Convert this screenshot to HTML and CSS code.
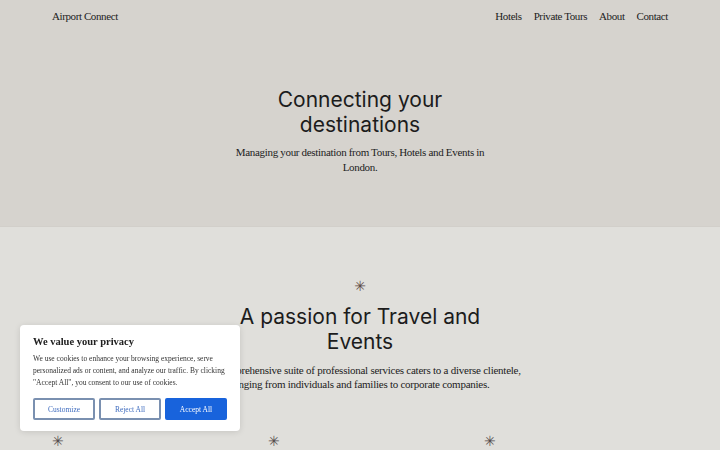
FILE: index.html
```html
<!DOCTYPE html>
<html lang="en">
<head>
    <meta charset="UTF-8">
    <meta name="viewport" content="width=device-width, initial-scale=1.0">
    <title>Airport Connect</title>
    <link rel="stylesheet" href="styles.css">
</head>
<body>
    <header class="hero">
        <nav class="site-nav">
            <a class="brand" href="#">Airport Connect</a>
            <ul class="nav-links">
                <li><a href="#">Hotels</a></li>
                <li><a href="#">Private Tours</a></li>
                <li><a href="#">About</a></li>
                <li><a href="#">Contact</a></li>
            </ul>
        </nav>
        <div class="hero-body">
            <h1>Connecting your destinations</h1>
            <p>Managing your destination from Tours, Hotels and Events in London.</p>
        </div>
    </header>

    <section class="intro">
        <span class="star">&#10035;</span>
        <h2>A passion for Travel and Events</h2>
        <p>Our comprehensive suite of professional services caters to a diverse clientele, ranging from individuals and families to corporate companies.</p>

        <div class="features">
            <div class="feature"><span class="star">&#10035;</span></div>
            <div class="feature"><span class="star">&#10035;</span></div>
            <div class="feature"><span class="star">&#10035;</span></div>
        </div>
    </section>

    <!-- Cookie consent -->
    <div class="cookie-box">
        <h3>We value your privacy</h3>
        <p>We use cookies to enhance your browsing experience, serve personalized ads or content, and analyze our traffic. By clicking "Accept All", you consent to our use of cookies.</p>
        <div class="cookie-actions">
            <button class="btn btn-outline">Customize</button>
            <button class="btn btn-outline">Reject All</button>
            <button class="btn btn-solid">Accept All</button>
        </div>
    </div>
</body>
</html>
```

FILE: styles.css
```css
/* Basic Styles */
body {
    margin: 0;
    font-family: "Liberation Serif", serif;
    color: #222;
    overflow: hidden;
}

a {
    color: inherit;
    text-decoration: none;
}

h1, h2 {
    font-family: Inter, "Noto Sans", sans-serif;
    font-weight: 400;
    font-size: 21px;
    line-height: 25px;
    margin: 0;
    color: #1c1c1c;
}

/* Header / Hero */
.hero {
    background: #d6d3ce;
    height: 227px;
    border-bottom: 1px solid #d2cfca;
    box-sizing: border-box;
}

.site-nav {
    display: flex;
    justify-content: space-between;
    align-items: center;
    padding: 10px 52px 0;
    font-size: 11px;
    letter-spacing: -0.4px;
}

.nav-links {
    display: flex;
    gap: 12px;
    list-style: none;
    margin: 0;
    padding: 0;
}

.hero-body {
    text-align: center;
    width: 260px;
    margin: 0 auto;
    padding-top: 65px;
}

.hero-body h1 {
    width: 180px;
    margin: 0 auto;
}

.hero-body p {
    font-size: 11px;
    line-height: 15px;
    margin: 8px 0 0;
    letter-spacing: -0.32px;
}

/* Intro section */
.intro {
    background: #e0dfdb;
    height: 223px;
    text-align: center;
    padding-top: 51px;
    box-sizing: border-box;
}

.star {
    display: block;
    color: #5e4c48;
    font-size: 14px;
    font-weight: bold;
    line-height: 16px;
    font-family: "DejaVu Sans", sans-serif;
}

.intro h2 {
    width: 260px;
    margin: 10px auto 0;
}

.intro p {
    width: 340px;
    margin: 9px auto 0;
    font-size: 11px;
    line-height: 14px;
    letter-spacing: -0.25px;
}

.features {
    display: grid;
    grid-template-columns: repeat(3, 1fr);
    gap: 32px;
    padding: 41px 52px 0;
    text-align: left;
}

.feature .star {
    display: inline-block;
    color: #554d4d;
}

/* Cookie banner */
.cookie-box {
    position: fixed;
    left: 20px;
    top: 325px;
    width: 220px;
    box-sizing: border-box;
    padding: 10px 13px 11px;
    background: #fff;
    border-radius: 4px;
    box-shadow: 0 1px 6px rgba(0, 0, 0, 0.12);
}

.cookie-box h3 {
    margin: 0;
    font-size: 10.5px;
    line-height: 13px;
    color: #212121;
}

.cookie-box p {
    margin: 5px 0 0;
    font-size: 7.5px;
    line-height: 12px;
    color: #333;
}

.cookie-actions {
    display: flex;
    gap: 4px;
    margin-top: 9px;
}

.btn {
    flex: 1;
    height: 22px;
    font-family: "Liberation Serif", serif;
    font-size: 7.5px;
    border-radius: 2px;
    cursor: pointer;
    padding: 0;
}

.btn-outline {
    background: #fff;
    border: 2px solid #7a90b0;
    color: #3f6cbf;
}

.btn-solid {
    background: #1863dc;
    border: 2px solid #1863dc;
    color: #fff;
}
```
